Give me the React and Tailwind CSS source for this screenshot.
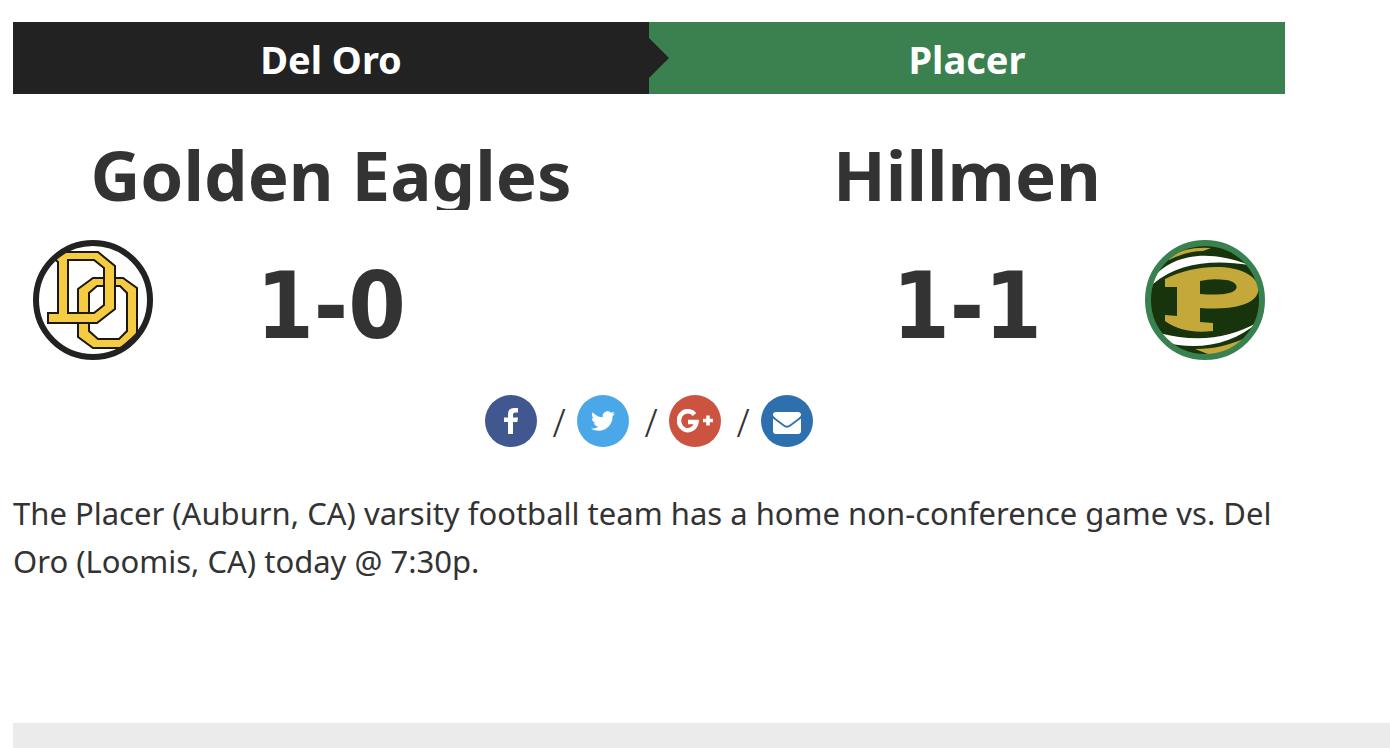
import { FaTwitter } from "react-icons/fa";

const shares = [
  { label: "Share on Facebook", color: "bg-[#41578f]", icon: <Facebook /> },
  { label: "Share on Twitter", color: "bg-[#4ba8e8]", icon: <FaTwitter size={24} /> },
  { label: "Share on Google+", color: "bg-[#cb533f]", icon: <GooglePlus /> },
  { label: "Share by email", color: "bg-[#2d70ad]", icon: <Envelope /> },
];

export default function App() {
  return (
    <div className="min-h-screen flex flex-col bg-white pl-[13px] pt-[22px] font-['Noto_Sans',sans-serif] text-[#333333]">
      <main className="mr-[105px]">
        {/* Team bar */}
        <div className="grid grid-cols-2 text-center text-[38px] leading-[72px] font-bold text-white">
          <div className="relative h-[72px] pt-px bg-[#222222]">
            <a href="#del-oro">Del Oro</a>
            <span className="absolute left-full top-4 border-y-[20px] border-l-[20px] border-y-transparent border-l-[#222222]" />
          </div>
          <div className="h-[72px] pt-px bg-[#3b8150]">
            <a href="#placer">Placer</a>
          </div>
        </div>

        {/* Mascots and records */}
        <div className="grid grid-cols-2 pt-11">
          <Team name="Golden Eagles" record="1-0" logo={<DelOroLogo />} />
          <Team name="Hillmen" record="1-1" logo={<PlacerLogo />} right />
        </div>

        {/* Share */}
        <div className="flex justify-center pt-[35px]">
          {shares.map((s, i) => (
            <div key={s.label} className="flex items-center">
              {i > 0 && (
                <span className="w-10 h-[52px] pl-1 pt-px text-center text-[38px] leading-[52px] font-light">/</span>
              )}
              <a
                href="#share"
                aria-label={s.label}
                className={`flex items-center justify-center size-[52px] rounded-full text-white ${s.color}`}
              >
                {s.icon}
              </a>
            </div>
          ))}
        </div>

        <p className="pt-[42px] text-[31px] leading-[48px]">
          The Placer (Auburn, CA) varsity football team has a home non-conference game vs. Del Oro
          (Loomis, CA) today @ 7:30p.
        </p>
      </main>

      <div className="mt-[138px] min-h-[25px] grow bg-[#ebebeb]" />
    </div>
  );
}

/* --- COMPONENTS --- */

function Team({ name, record, logo, right }) {
  return (
    <section className="text-center">
      <h2 className="overflow-hidden text-[69px] leading-[72px] font-bold">{name}</h2>
      <div className={`flex items-center px-5 pt-[30px] ${right ? "flex-row-reverse" : ""}`}>
        <div className="size-[120px] shrink-0">{logo}</div>
        <div className="grow h-[120px] pt-[7px] font-['DejaVu_Sans_Condensed','Noto_Sans',sans-serif] text-[92px] leading-[120px] font-bold">
          {record}
        </div>
        <div className="w-[120px] shrink-0" />
      </div>
    </section>
  );
}

function DelOroLogo() {
  return (
    <svg viewBox="10 10 120 120" className="size-full" role="img" aria-label="Del Oro">
      <defs>
        <clipPath id="do-clip">
          <circle cx="70" cy="70" r="55" />
        </clipPath>
      </defs>
      <g clipPath="url(#do-clip)" fill="#f5cb42" stroke="#1b180f" strokeWidth="2" fillRule="evenodd">
        <path d="M70 48H100L114 58V104L98 118H70L55 107V59ZM74 56L66 63V101L75 109H96L104 101V63L97 56Z" />
        <path d="M30 22H75L92 36V79L74 93H25V83H35V32L30 28ZM45 30V83H71L81 75V38L71 30Z" />
      </g>
      <circle cx="70" cy="70" r="57" fill="none" stroke="#222222" strokeWidth="6" />
    </svg>
  );
}

function PlacerLogo() {
  return (
    <svg viewBox="10 10 120 120" className="size-full" role="img" aria-label="Placer">
      <defs>
        <clipPath id="p-clip">
          <circle cx="70" cy="70" r="56" />
        </clipPath>
      </defs>
      <g clipPath="url(#p-clip)">
        <path d="M10 10H130V130H10Z" fill="#18340c" />
        <path d="M34 27Q52 16 76 18L68 21Q52 21 34 30Z" fill="#c4a93a" />
        <path d="M16 50C34 27 68 17 114 35C78 29 42 33 18 54Z" fill="#fff" />
        <path d="M24 103C60 112 92 110 123 92C98 115 62 121 28 112Z" fill="#fff" />
        <path d="M60 119C80 119 94 115 108 109L98 121L78 126Z" fill="#c4a93a" />
        <path
          d="M30 49C56 36 91 33 111 43C130 53 126 70 107 75C94 79 80 79 65 78V92L78 93V101C60 103 44 101 30 91V85L42 86V57L30 57ZM65 51V64C80 65 92 65 99 61C105 57 100 51 91 50Q77 48 65 51Z"
          fill="#c4a93a"
          fillRule="evenodd"
        />
      </g>
      <circle cx="70" cy="70" r="57" fill="none" stroke="#398250" strokeWidth="6" />
    </svg>
  );
}

function Facebook() {
  return (
    <svg viewBox="0 0 14 26" className="w-[14px] h-[26px]" fill="currentColor">
      <path d="M4 26V14H0V9.500H4V6Q4 0 10 0H14V4.500H11.500Q9 4.500 9 6.800V9.500H14L13.300 14H9V26Z" />
    </svg>
  );
}

function GooglePlus() {
  return (
    <svg viewBox="0 0 36 24" className="w-9 h-6" fill="none" stroke="currentColor">
      <path d="M17.500 5.500A8.800 9.500 0 1 0 19.500 13H11" strokeWidth="4.500" />
      <path d="M31 6.500V16.500M26 11.500H36" strokeWidth="3.500" />
    </svg>
  );
}

function Envelope() {
  return (
    <svg viewBox="0 0 28 22" className="w-7 h-[22px] mt-1" fill="currentColor">
      <path d="M3 0H25Q28 0 28 3Q28 4 25 6.500L17 12.500Q14 15 11 12.500L3 6.500Q0 4 0 3Q0 0 3 0Z" />
      <path d="M0 6.500L10 14Q14 17.500 18 14L28 6.500V19Q28 22 25 22H3Q0 22 0 19Z" />
    </svg>
  );
}
